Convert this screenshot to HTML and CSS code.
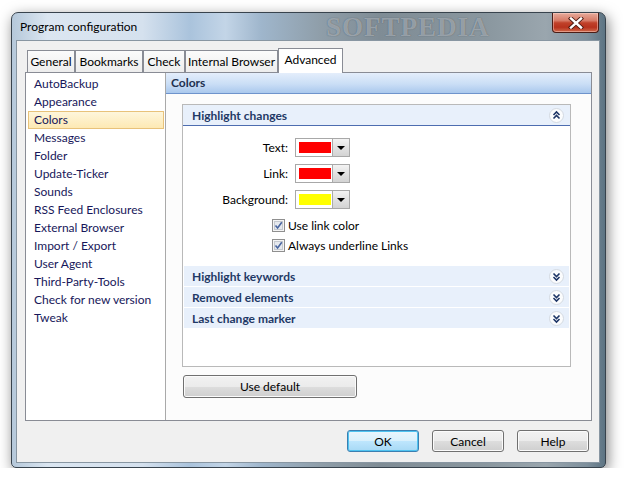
FILE: index.html
```html
<!DOCTYPE html>
<html>
<head>
<meta charset="utf-8">
<link rel="stylesheet" href="styles.css">
</head>
<body>
<div class="window">
  <div class="titlebar">
    <span class="title">Program configuration</span>
    <span class="watermark">SOFTPEDIA</span>
    <div class="close">
      <svg width="16" height="12" viewBox="0 0 16 12"><path d="M3 1.5 L13 10.5 M13 1.5 L3 10.5" stroke="#4a1a12" stroke-width="4.2" stroke-linecap="square"/><path d="M3 1.5 L13 10.5 M13 1.5 L3 10.5" stroke="#ffffff" stroke-width="2.4" stroke-linecap="square"/></svg>
    </div>
  </div>
  <div class="client">
    <div class="tabs">
      <div class="tab w-general">General</div>
      <div class="tab w-bookmarks">Bookmarks</div>
      <div class="tab w-check">Check</div>
      <div class="tab w-internal">Internal Browser</div>
      <div class="tab active w-advanced">Advanced</div>
    </div>
    <div class="panel">
      <ul class="list">
        <li>AutoBackup</li>
        <li>Appearance</li>
        <li class="selected">Colors</li>
        <li>Messages</li>
        <li>Folder</li>
        <li>Update-Ticker</li>
        <li>Sounds</li>
        <li>RSS Feed Enclosures</li>
        <li>External Browser</li>
        <li>Import / Export</li>
        <li>User Agent</li>
        <li>Third-Party-Tools</li>
        <li>Check for new version</li>
        <li>Tweak</li>
      </ul>
      <div class="main">
        <div class="main-head">Colors</div>
        <div class="main-body">
          <div class="group">
            <div class="group-head">
              <span>Highlight changes</span>
              <svg class="chev" width="15" height="15" viewBox="0 0 15 15"><circle cx="7.5" cy="7.5" r="7" fill="#fbfcfd" stroke="#d3d9e1"/><path d="M4.5 7 L7.5 4 L10.5 7 M4.5 10.5 L7.5 7.5 L10.5 10.5" fill="none" stroke="#1d3566" stroke-width="1.6"/></svg>
            </div>
            <div class="form">
              <label class="lbl">Text:</label>
              <div class="combo"><span class="swatch red"></span><span class="drop"><i class="tri"></i></span></div>
              <label class="lbl">Link:</label>
              <div class="combo"><span class="swatch red"></span><span class="drop"><i class="tri"></i></span></div>
              <label class="lbl">Background:</label>
              <div class="combo"><span class="swatch yellow"></span><span class="drop"><i class="tri"></i></span></div>
            </div>
            <div class="checks">
              <div class="check">
                <svg width="13" height="13" viewBox="0 0 13 13"><rect x="0.5" y="0.5" width="12" height="12" fill="#f4f4f4" stroke="#8f8f8f"/><rect x="2.5" y="2.5" width="8" height="8" fill="#e6e9ee" stroke="#c4c8ce"/><path d="M3.5 6.5 L5.6 9 L9.8 3.2" fill="none" stroke="#4a66a0" stroke-width="1.6"/></svg>
                <span>Use link color</span>
              </div>
              <div class="check">
                <svg width="13" height="13" viewBox="0 0 13 13"><rect x="0.5" y="0.5" width="12" height="12" fill="#f4f4f4" stroke="#8f8f8f"/><rect x="2.5" y="2.5" width="8" height="8" fill="#e6e9ee" stroke="#c4c8ce"/><path d="M3.5 6.5 L5.6 9 L9.8 3.2" fill="none" stroke="#4a66a0" stroke-width="1.6"/></svg>
                <span>Always underline Links</span>
              </div>
            </div>
            <div class="sections">
              <div class="section">
                <span>Highlight keywords</span>
                <svg class="chev" width="15" height="15" viewBox="0 0 15 15"><circle cx="7.5" cy="7.5" r="7" fill="#fbfcfd" stroke="#d3d9e1"/><path d="M4.5 4.5 L7.5 7.5 L10.5 4.5 M4.5 8 L7.5 11 L10.5 8" fill="none" stroke="#1d3566" stroke-width="1.6"/></svg>
              </div>
              <div class="section">
                <span>Removed elements</span>
                <svg class="chev" width="15" height="15" viewBox="0 0 15 15"><circle cx="7.5" cy="7.5" r="7" fill="#fbfcfd" stroke="#d3d9e1"/><path d="M4.5 4.5 L7.5 7.5 L10.5 4.5 M4.5 8 L7.5 11 L10.5 8" fill="none" stroke="#1d3566" stroke-width="1.6"/></svg>
              </div>
              <div class="section">
                <span>Last change marker</span>
                <svg class="chev" width="15" height="15" viewBox="0 0 15 15"><circle cx="7.5" cy="7.5" r="7" fill="#fbfcfd" stroke="#d3d9e1"/><path d="M4.5 4.5 L7.5 7.5 L10.5 4.5 M4.5 8 L7.5 11 L10.5 8" fill="none" stroke="#1d3566" stroke-width="1.6"/></svg>
              </div>
            </div>
          </div>
          <button class="btn btn-wide">Use default</button>
        </div>
      </div>
    </div>
    <div class="footer">
      <button class="btn btn-default">OK</button>
      <button class="btn">Cancel</button>
      <button class="btn">Help</button>
    </div>
  </div>
</div>
</body>
</html>
```
FILE: styles.css
```css
html, body {
  margin: 0;
  padding: 0;
  background: #ffffff;
}
body {
  font-family: "Lato", "Liberation Sans", sans-serif;
  font-size: 12px;
  color: #000;
}
.window {
  box-sizing: border-box;
  position: relative;
  margin: 12px 0 0 11px;
  width: 595px;
  height: 456px;
  border: 1px solid #38434d;
  border-radius: 7px 7px 5px 5px;
  box-shadow: 2px 4px 14px rgba(0, 0, 0, 0.5);
  padding: 0 5px 4px 4px;
  display: flex;
  flex-direction: column;
  background: linear-gradient(90deg, #b5c8da 0%, #dbe6f1 6%, #d5e1ee 22%, #aac3dc 30%, #c3d5e7 36%, #9fb6cc 42%, #8f9ea9 52%, #7f8c95 62%, #8a979f 80%, #9aa6ae 90%, #7d8f9c 97%, #5d7483 100%);
}
.titlebar {
  height: 27px;
  display: flex;
  align-items: flex-start;
  position: relative;
}
.title {
  padding-left: 4px;
  line-height: 28px;
  color: #000;
}
.watermark {
  position: absolute;
  left: 310px;
  top: 0px;
  font-family: "Liberation Serif", serif;
  font-weight: bold;
  font-size: 27px;
  line-height: 28px;
  letter-spacing: 1px;
  color: rgba(225, 232, 238, 0.5);
  text-shadow: 0 0 1px rgba(30, 40, 50, 0.6);
}
.close {
  margin-left: auto;
  margin-right: 1px;
  box-sizing: border-box;
  width: 47px;
  height: 20px;
  border: 1px solid #4b1d16;
  border-top: none;
  border-radius: 0 0 4px 4px;
  background: linear-gradient(#e7ab9c 0%, #d67a66 40%, #c0412a 52%, #b7321d 75%, #cf6a4c 100%);
  box-shadow: inset 0 0 0 1px rgba(255, 220, 210, 0.45);
  display: flex;
  align-items: center;
  justify-content: center;
}
.client {
  flex: 1;
  box-sizing: border-box;
  border: 1px solid #8896a2;
  background: #f0f0f0;
  padding: 7px 7px 0 8px;
  display: flex;
  flex-direction: column;
}
.tabs {
  display: flex;
  height: 24px;
  padding-left: 2px;
  align-items: flex-start;
}
.tab {
  box-sizing: border-box;
  margin-top: 2px;
  height: 22px;
  border: 1px solid #898c95;
  border-bottom: none;
  background: linear-gradient(#fbfbfb, #ededed);
  text-align: center;
  line-height: 21px;
  color: #000;
}
.tab.active {
  margin-top: 0;
  height: 25px;
  background: #ffffff;
  position: relative;
  z-index: 1;
  line-height: 22px;
}
.w-general { width: 48px; }
.w-bookmarks { width: 68px; }
.w-check { width: 42px; }
.w-internal { width: 93px; }
.w-advanced { width: 65px; }
.panel {
  box-sizing: border-box;
  height: 349px;
  border: 1px solid #898c95;
  background: #ffffff;
  display: flex;
}
.list {
  list-style: none;
  margin: 0;
  padding: 2px 0 0 0;
  width: 139px;
  border-right: 1px solid #a9a9a9;
  background: #ffffff;
}
.list li {
  box-sizing: border-box;
  height: 18px;
  line-height: 16px;
  margin: 0 1px 0 2px;
  padding-left: 5px;
  border: 1px solid transparent;
  color: #17175a;
}
.list li.selected {
  border-color: #e8c27a;
  background: linear-gradient(#fef6dc, #fde9b4);
}
.main {
  flex: 1;
  background: #fcfcfc;
  display: flex;
  flex-direction: column;
}
.main-head {
  box-sizing: border-box;
  height: 21px;
  border-bottom: 1px solid #6e93cc;
  background: linear-gradient(#e4eefb, #cadef6 55%, #aac8ed);
  padding-left: 5px;
  line-height: 20px;
  font-weight: bold;
  color: #1e3150;
}
.main-body {
  padding: 10px 20px 0 16px;
  display: flex;
  flex-direction: column;
  align-items: flex-start;
}
.group {
  box-sizing: border-box;
  width: 389px;
  height: 263px;
  border: 1px solid #b9b9b9;
  background: #ffffff;
}
.group-head {
  box-sizing: border-box;
  height: 21px;
  border-bottom: 1px solid #4d6db0;
  background: #e8f0fb;
  display: flex;
  align-items: center;
  justify-content: space-between;
  padding: 0 6px 0 9px;
  font-weight: bold;
  color: #1f3966;
}
.chev {
  display: block;
}
.form {
  display: grid;
  grid-template-columns: 105px 55px;
  column-gap: 7px;
  row-gap: 7px;
  padding-top: 12px;
}
.lbl {
  text-align: right;
  line-height: 19px;
}
.combo {
  box-sizing: border-box;
  width: 55px;
  height: 19px;
  border: 1px solid #a8a8a8;
  background: #ffffff;
  display: flex;
}
.swatch {
  width: 32px;
  height: 11px;
  margin: 3px 0 0 3px;
}
.swatch.red { background: #ff0000; }
.swatch.yellow { background: #ffff00; }
.drop {
  margin-left: auto;
  width: 16px;
  border-left: 1px solid #ababab;
  background: linear-gradient(#f3f3f3, #e2e2e2 50%, #d3d3d3);
  display: flex;
  align-items: center;
  justify-content: center;
}
.tri {
  width: 0;
  height: 0;
  border-left: 4px solid transparent;
  border-right: 4px solid transparent;
  border-top: 4px solid #000;
}
.checks {
  margin: 6px 0 0 89px;
}
.check {
  height: 20px;
  display: flex;
  align-items: center;
  gap: 3px;
}
.check svg {
  display: block;
}
.sections {
  margin-top: 11px;
  padding: 0 1px;
}
.section {
  box-sizing: border-box;
  height: 20px;
  margin-bottom: 1px;
  background: #e8f0fb;
  display: flex;
  align-items: center;
  justify-content: space-between;
  padding: 0 5px 0 8px;
  font-weight: bold;
  color: #1f3966;
}
.btn {
  box-sizing: border-box;
  width: 72px;
  height: 22px;
  border: 1px solid #707070;
  border-radius: 3px;
  background: linear-gradient(#f2f2f2 0%, #ebebeb 50%, #dddddd 51%, #cfcfcf 100%);
  box-shadow: inset 0 0 0 1px #fbfbfb;
  font-family: "Lato", "Liberation Sans", sans-serif;
  font-size: 12px;
  color: #000;
  padding: 0;
}
.btn-wide {
  width: 174px;
  height: 23px;
  margin: 8px 0 0 1px;
}
.btn-default {
  border-color: #3c7fb1;
  background: linear-gradient(#eaf6fd 0%, #d9f0fc 50%, #bee6fd 51%, #a7d9f5 100%);
  box-shadow: inset 0 0 0 1px #4fc3f0;
}
.footer {
  margin-top: 9px;
  padding-right: 3px;
  display: flex;
  justify-content: flex-end;
  gap: 13px;
}
```
